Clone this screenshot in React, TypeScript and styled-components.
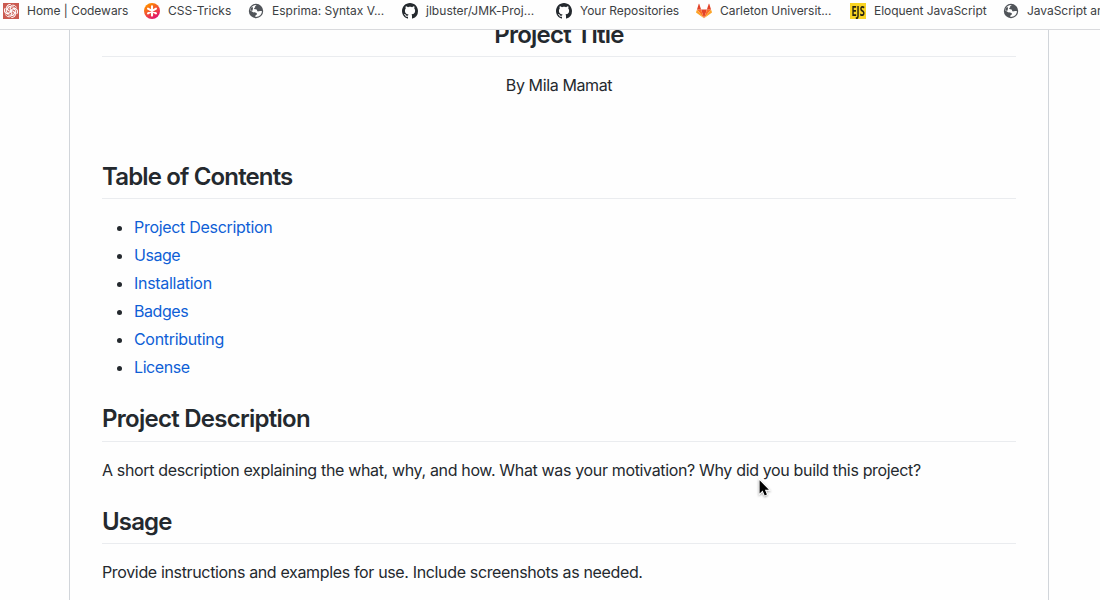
import React from "react";
import styled, { createGlobalStyle } from "styled-components";

const GlobalStyle = createGlobalStyle`
  * { box-sizing: border-box; }
  body {
    margin: 0;
    background: #fefefe;
    color: #24292e;
    font-family: Inter, "Liberation Sans", sans-serif;
    overflow: hidden;
  }
`;

const Window = styled.div`
  display: flex;
  flex-direction: column;
  width: 1100px;
  height: 600px;
  overflow: hidden;
  position: relative;
`;

const BookmarksBar = styled.nav`
  display: flex;
  flex: none;
  height: 30px;
  padding: 3px 0 0 3px;
  border-bottom: 1px solid #d9dadd;
  overflow: hidden;
`;

const Bookmark = styled.div<{ $width: number }>`
  display: flex;
  flex: none;
  gap: 8px;
  width: ${(p) => p.$width}px;
  height: 16px;
  align-items: center;
  white-space: nowrap;
`;

const BookmarkIcon = styled.span`
  display: flex;
  flex: none;
  width: 16px;
  height: 16px;
`;

const BookmarkLabel = styled.span<{ $spacing: number }>`
  font-size: 12px;
  line-height: 16px;
  color: #3c4043;
  letter-spacing: ${(p) => p.$spacing}px;
`;

const Viewport = styled.main`
  flex: 1;
  min-height: 0;
  overflow: hidden;
`;

const Article = styled.article`
  width: 980px;
  height: 640px;
  margin: -12px 0 0 69px;
  padding: 0 32px;
  border: solid #d1d5da;
  border-width: 0 1px;
  font-size: 16px;
  line-height: 24px;
`;

const Heading = styled.h2<{ $center?: boolean; $spacing: number }>`
  margin: 25px 0 16px;
  padding-bottom: 6.2px;
  border-bottom: 1px solid #eaecef;
  font-size: 24px;
  font-weight: 600;
  line-height: 30px;
  text-align: ${(p) => (p.$center ? "center" : "left")};
  letter-spacing: ${(p) => p.$spacing}px;
  &:first-child { margin-top: 1.8px; }
`;

const Paragraph = styled.p<{ $spacing: number }>`
  margin: 0 0 16px;
  letter-spacing: ${(p) => p.$spacing}px;
`;

const Byline = styled(Paragraph)`
  margin-bottom: 65px;
  text-align: center;
`;

const Contents = styled.ul`
  margin: 0 0 25.15px;
  padding-left: 32px;
`;

const Entry = styled.li<{ $spacing: number }>`
  letter-spacing: ${(p) => p.$spacing}px;
  & + & { margin-top: 4px; }
`;

const Link = styled.a`
  color: #0f5fd6;
  text-decoration: none;
`;

const Pointer = styled.svg`
  position: absolute;
  left: 756px;
  top: 478px;
  filter: drop-shadow(0 1px 1px rgba(0, 0, 0, 0.35));
`;

const CodewarsIcon = () => (
  <svg width="16" height="16" viewBox="0 0 16 16">
    <rect width="16" height="16" fill="#cb5a50" />
    <g fill="none" stroke="#fff" strokeWidth="1" strokeLinecap="round">
      {[0, 60, 120, 180, 240, 300].map((angle) => (
        <path
          key={angle}
          d="M8 8C6.6 6.6 6.8 4.4 8.8 3.9C10.2 3.6 11.4 4.3 11.9 5.3M7.1 5.6C6.9 3.4 8.6 1.7 11 2.3C12 2.6 12.8 3.3 13.2 4.2"
          transform={`rotate(${angle} 8 8)`}
        />
      ))}
    </g>
  </svg>
);

const CssTricksIcon = () => (
  <svg width="16" height="16" viewBox="0 0 16 16">
    <defs>
      <linearGradient id="ember" x1="0.2" y1="0" x2="0.8" y2="1">
        <stop offset="0.1" stopColor="#ff8a00" />
        <stop offset="0.9" stopColor="#e3156b" />
      </linearGradient>
    </defs>
    <circle cx="8" cy="8" r="8" fill="url(#ember)" />
    <g stroke="#fff" strokeWidth="2.1" strokeLinecap="round">
      <path d="M8 3.4v9.2M4 5.7l8 4.6M12 5.7l-8 4.6" />
    </g>
  </svg>
);

const GlobeIcon = () => (
  <svg width="16" height="16" viewBox="0 0 16 16">
    <circle cx="8" cy="8" r="7.2" fill="#505459" />
    <path
      d="M8.8 2.1c-.8.6-1.9.7-1.6 1.8.2.8-1.3.8-1.1 1.7.2 1 1.5.5 2.4 1 .9.6.3 1.8 1.6 1.9 1.2 0 1.6-.7 3.9-.2-.1 1.8-1 3.5-2.5 4.5-1 .8-2.5 1.2-4.1 1.1.1-1-.2-1.5.6-1.8 1-.3 1.2-1.3.5-2-.8-.8-2.2-.3-3.3-.8C4 8.8 3.2 7.8 2 7.6c.2-2 1.3-3.7 2.9-4.7 1.2-.8 2.5-1.1 3.9-.8Z"
      fill="#fefefe"
    />
    <path d="M2.4 7.5c-.3-1.4.6-2.9 1.8-3.8L5 5.1l-.4 2.3-1 .4Z" fill="#505459" />
  </svg>
);

const GitHubIcon = () => (
  <svg width="16" height="16" viewBox="0 0 16 16" fill="#24292e">
    <path
      fillRule="evenodd"
      d="M8 0C3.58 0 0 3.58 0 8c0 3.54 2.29 6.53 5.47 7.59.4.07.55-.17.55-.38 0-.19-.01-.82-.01-1.49-2.01.37-2.53-.49-2.69-.94-.09-.23-.48-.94-.82-1.13-.28-.15-.68-.52-.01-.53.63-.01 1.08.58 1.23.82.72 1.21 1.87.87 2.33.66.07-.52.28-.87.51-1.07-1.78-.2-3.64-.89-3.64-3.95 0-.87.31-1.59.82-2.15-.08-.2-.36-1.02.08-2.12 0 0 .67-.21 2.2.82.64-.18 1.32-.27 2-.27.68 0 1.36.09 2 .27 1.53-1.04 2.2-.82 2.2-.82.44 1.1.16 1.92.08 2.12.51.56.82 1.27.82 2.15 0 3.07-1.87 3.75-3.65 3.95.29.25.54.73.54 1.48 0 1.07-.01 1.93-.01 2.2 0 .21.15.46.55.38A8.013 8.013 0 0016 8c0-4.42-3.58-8-8-8z"
    />
  </svg>
);

const GitLabIcon = () => (
  <svg width="16" height="16" viewBox="0 0 16 16">
    <path d="M8 15.2 10.9 6.4H5.1Z" fill="#e24329" />
    <path d="M8 15.2 5.1 6.4H1Z" fill="#fc6d26" />
    <path d="M8 15.2 10.9 6.4H15Z" fill="#fc6d26" />
    <path d="M1 6.4.1 9.1c-.1.3 0 .5.2.7L8 15.2Z" fill="#fca326" />
    <path d="m15 6.4.9 2.7c.1.3 0 .5-.2.7L8 15.2Z" fill="#fca326" />
    <path d="M1 6.4h4.1L3.3 1c-.1-.3-.5-.3-.6 0Z" fill="#e24329" />
    <path d="M15 6.4h-4.1L12.7 1c.1-.3.5-.3.6 0Z" fill="#e24329" />
  </svg>
);

const EjsBadge = styled.span`
  display: flex;
  justify-content: center;
  width: 16px;
  height: 16px;
  background: #f9d423;
  color: #26220f;
  font: 700 14px/16px "Open Sans", sans-serif;
`;

const EjsText = styled.span`
  transform: scaleX(0.66);
`;

const EjsIcon = () => (
  <EjsBadge>
    <EjsText>EJS</EjsText>
  </EjsBadge>
);

const bookmarks = [
  { label: "Home | Codewars", width: 141, spacing: -0.03, Icon: CodewarsIcon },
  { label: "CSS-Tricks", width: 104, spacing: 0, Icon: CssTricksIcon },
  { label: "Esprima: Syntax V...", width: 154, spacing: 0, Icon: GlobeIcon },
  { label: "jlbuster/JMK-Proj...", width: 154, spacing: 0.03, Icon: GitHubIcon },
  { label: "Your Repositories", width: 140, spacing: -0.03, Icon: GitHubIcon },
  { label: "Carleton Universit...", width: 154, spacing: -0.03, Icon: GitLabIcon },
  { label: "Eloquent JavaScript", width: 153, spacing: -0.04, Icon: EjsIcon },
  { label: "JavaScript and Node", width: 153, spacing: -0.04, Icon: GlobeIcon },
];

const entries = [
  { label: "Project Description", spacing: -0.3 },
  { label: "Usage", spacing: -0.45 },
  { label: "Installation", spacing: -0.3 },
  { label: "Badges", spacing: -0.45 },
  { label: "Contributing", spacing: -0.32 },
  { label: "License", spacing: -0.42 },
];

export default function App() {
  return (
    <Window>
      <GlobalStyle />
      <BookmarksBar>
        {bookmarks.map(({ label, width, spacing, Icon }) => (
          <Bookmark key={label} $width={width}>
            <BookmarkIcon><Icon /></BookmarkIcon>
            <BookmarkLabel $spacing={spacing}>{label}</BookmarkLabel>
          </Bookmark>
        ))}
      </BookmarksBar>
      <Viewport>
        <Article>
          <Heading $center $spacing={-0.73}>Project Title</Heading>
          <Byline $spacing={-0.38}>By Mila Mamat</Byline>
          <Heading $spacing={-0.85}>Table of Contents</Heading>
          <Contents>
            {entries.map(({ label, spacing }) => (
              <Entry key={label} $spacing={spacing}><Link>{label}</Link></Entry>
            ))}
          </Contents>
          <Heading $spacing={-0.73}>Project Description</Heading>
          <Paragraph $spacing={-0.345}>
            A short description explaining the what, why, and how. What was your motivation? Why did you build this project?
          </Paragraph>
          <Heading $spacing={-0.85}>Usage</Heading>
          <Paragraph $spacing={-0.35}>
            Provide instructions and examples for use. Include screenshots as needed.
          </Paragraph>
        </Article>
      </Viewport>
      <Pointer width="16" height="22" viewBox="0 0 16 22">
        <path
          d="M3.6 2.2v13.2l3-2.8 2.1 4.8 2.2-1-2-4.6h4Z"
          fill="#000"
          stroke="#fff"
          strokeWidth="1.8"
          paintOrder="stroke"
        />
      </Pointer>
    </Window>
  );
}
